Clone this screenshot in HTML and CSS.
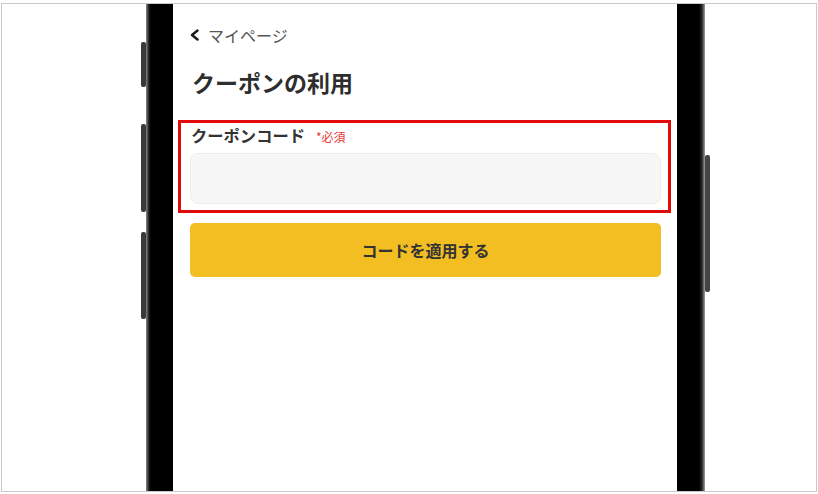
FILE: index.html
```html
<!DOCTYPE html>
<html lang="ja">
<head>
<meta charset="utf-8">
<title>クーポンの利用</title>
<link rel="stylesheet" href="styles.css">
</head>
<body>
<div class="frame">
  <div class="phone">
    <span class="side-btn side-btn-1"></span>
    <span class="side-btn side-btn-2"></span>
    <span class="side-btn side-btn-3"></span>
    <span class="side-btn side-btn-r"></span>
    <div class="screen">
      <div class="back">
        <svg class="chev" width="10" height="12" viewBox="0 0 10 12"><polyline points="7.5,1.5 2,6 7.5,10.5" fill="none" stroke="#1a1a1a" stroke-width="2.4" stroke-linecap="round" stroke-linejoin="round"/></svg>
        <span class="back-text">マイページ</span>
      </div>
      <h1 class="title">クーポンの利用</h1>
      <div class="field">
        <div class="label-row">
          <span class="label">クーポンコード</span>
          <span class="req">*必須</span>
        </div>
        <div class="input"></div>
      </div>
      <div class="btn">コードを適用する</div>
    </div>
  </div>
</div>
</body>
</html>
```

FILE: styles.css
```css
* { box-sizing: border-box; }
html, body { margin: 0; padding: 0; background: #fff; }
body {
  font-family: "Noto Sans CJK JP", "Noto Sans", sans-serif;
  color: #333;
}
.frame {
  margin: 3px 0 0 1px;
  width: 816px;
  height: 489px;
  border: 1px solid #c9c9c9;
  overflow: hidden;
  display: flex;
  padding-left: 144px;
  background: #fff;
}
.phone {
  position: relative;
  width: 559px;
  height: 100%;
  display: flex;
  padding: 0 28px 0 27px;
  background: linear-gradient(to right, #8a8a8a 0, #1a1a1a 3px, #000 5px, #000 calc(100% - 6px), #2a2a2a calc(100% - 3px), #a0a0a0 100%);
}
.side-btn {
  position: absolute;
  width: 5px;
  background: #3a3a3a;
  border-radius: 2px;
}
.side-btn-1 { left: -5px; top: 38px; height: 45px; }
.side-btn-2 { left: -5px; top: 120px; height: 88px; }
.side-btn-3 { left: -5px; top: 228px; height: 87px; }
.side-btn-r { right: -5px; top: 151px; height: 137px; background: #444; }
.screen {
  flex: 1;
  background: #fff;
  padding: 21px 16px 0 17px;
}
.back {
  display: flex;
  align-items: center;
  height: 20px;
}
.chev { display: block; margin-left: 0; }
.back-text {
  margin-left: 8px;
  font-size: 16px;
  line-height: 20px;
  color: #555;
}
.title {
  margin: 22px 0 0 2px;
  font-size: 23px;
  line-height: 30px;
  font-weight: 700;
  color: #2e2e2e;
}
.field {
  margin: 23px -10px 0 -12px;
  border: 3px solid #e10b0b;
  padding: 2px 7px 6px 9px;
}
.label-row {
  display: flex;
  align-items: baseline;
  height: 21px;
  padding-left: 1px;
}
.label {
  font-size: 16.3px;
  line-height: 21px;
  font-weight: 700;
  color: #333;
}
.req {
  margin-left: 11px;
  font-size: 12px;
  color: #e53935;
}
.input {
  margin-top: 7px;
  height: 51px;
  background: #f7f7f8;
  border: 1px solid #ececec;
  border-radius: 8px;
}
.btn {
  margin-top: 10px;
  height: 54px;
  background: #f2be22;
  border-radius: 5px;
  display: flex;
  align-items: center;
  justify-content: center;
  font-size: 16px;
  font-weight: 700;
  color: #333;
}
```
